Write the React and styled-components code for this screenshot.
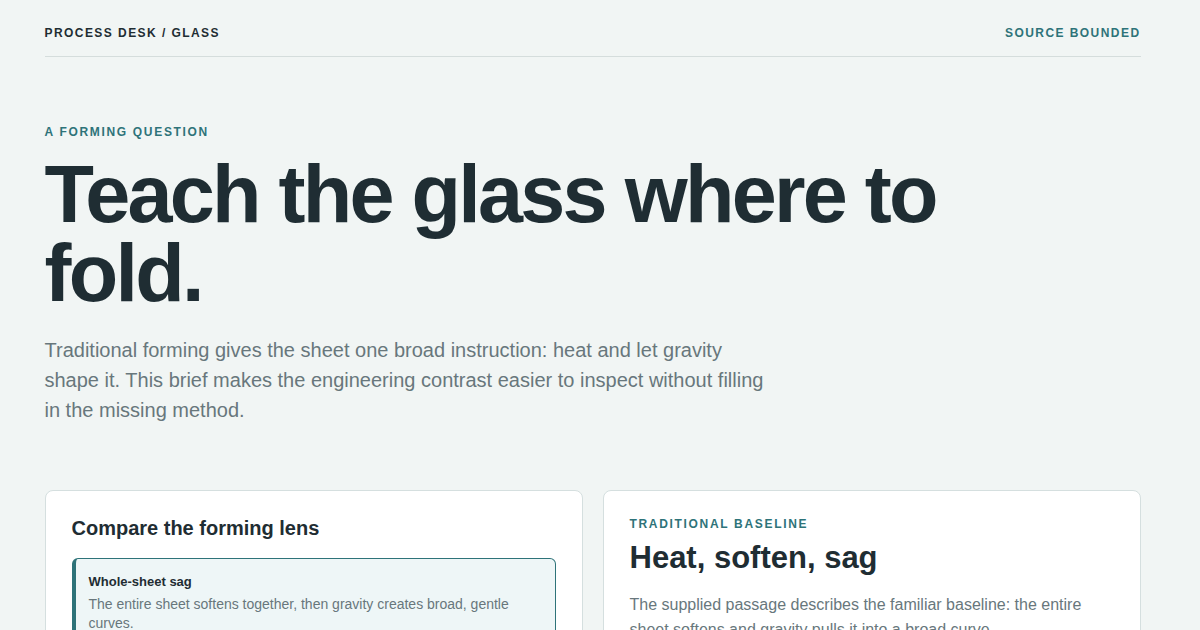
import React from "react";
import styled, { createGlobalStyle } from "styled-components";

const GlobalStyle = createGlobalStyle`
  html, body {
    margin: 0;
    padding: 0;
    background: #f1f5f4;
  }
  body {
    font-family: "Liberation Sans", Arial, sans-serif;
    color: #1f2d33;
  }
  * {
    box-sizing: border-box;
  }
`;

// leaves room on the right the way a scrolling window does
const Shell = styled.div`
  padding-right: 15px;
`;

const Page = styled.div`
  max-width: 1096px;
  margin: 0 auto;
  padding-bottom: 84px;
`;

const TopBar = styled.header`
  display: flex;
  justify-content: space-between;
  align-items: center;
  padding: 25px 0 15px;
  border-bottom: 1px solid #d5dddc;
`;

const Brand = styled.div`
  font-size: 12px;
  line-height: 16px;
  font-weight: 700;
  letter-spacing: 0.12em;
  text-transform: uppercase;
  color: ${props => (props.$accent ? "#2e7379" : "#1f2d33")};
`;

const Hero = styled.section`
  padding-top: 67px;
`;

const Eyebrow = styled.div`
  font-size: 12px;
  line-height: 16px;
  font-weight: 700;
  letter-spacing: 0.14em;
  text-transform: uppercase;
  color: #2e7379;
`;

const Headline = styled.h1`
  margin: 15px 0 0;
  max-width: 940px;
  font-size: 81px;
  line-height: 79px;
  font-weight: 700;
  letter-spacing: -0.034em;
  color: #1f2d33;
`;

const Lede = styled.p`
  margin: 22px 0 0;
  max-width: 722px;
  font-size: 20px;
  line-height: 30px;
  color: #68777c;
`;

const Cards = styled.section`
  display: grid;
  grid-template-columns: 1fr 1fr;
  gap: 20px;
  margin-top: 65px;
`;

const Card = styled.article`
  background: #ffffff;
  border: 1px solid #d5dfdf;
  border-radius: 8px;
  padding: 25px 26px 28px;
`;

const CardTitle = styled.h2`
  margin: 0 0 18px;
  font-size: 20px;
  line-height: 24px;
  font-weight: 700;
  color: #1f2d33;
`;

const Options = styled.div`
  display: flex;
  flex-direction: column;
  gap: 10px;
`;

const Option = styled.div`
  padding: 14px 16px 14px 13px;
  border: 1px solid ${props => (props.$active ? "#2e7379" : "#d5dfdf")};
  border-left: 4px solid ${props => (props.$active ? "#2e7379" : "#d5dfdf")};
  border-radius: 6px;
  background: ${props => (props.$active ? "#eef6f7" : "#ffffff")};
`;

const OptionName = styled.div`
  font-size: 13px;
  line-height: 18px;
  font-weight: 700;
  color: #1f2d33;
`;

const OptionText = styled.div`
  margin-top: 4px;
  font-size: 14px;
  line-height: 19px;
  color: #68777c;
`;

const CardEyebrow = styled(Eyebrow)`
  margin-bottom: 6px;
`;

const CardHeading = styled.h3`
  margin: 0;
  font-size: 31px;
  line-height: 40px;
  font-weight: 700;
  color: #1f2d33;
`;

const CardText = styled.p`
  margin: 14px 0 0;
  font-size: 16px;
  line-height: 25px;
  color: #68777c;
`;

const Points = styled.ul`
  margin: 18px 0 0;
  padding: 0;
  list-style: none;
  display: flex;
  flex-direction: column;
  gap: 10px;
`;

const Point = styled.li`
  padding-top: 10px;
  border-top: 1px solid #e3eaea;
  font-size: 14px;
  line-height: 20px;
  color: #1f2d33;
`;

const options = [
  {
    name: "Whole-sheet sag",
    text: "The entire sheet softens together, then gravity creates broad, gentle curves.",
    active: true
  },
  {
    name: "Directed folding",
    text: "Heat is placed where the fold should begin, so the sheet bends along chosen lines.",
    active: false
  },
  {
    name: "Open question",
    text: "The brief does not describe how the method is controlled, so it stays unstated here.",
    active: false
  }
];

export default function App() {
  return (
    <Shell>
      <GlobalStyle />
      <Page>
        <TopBar>
          <Brand>Process desk / Glass</Brand>
          <Brand $accent>Source bounded</Brand>
        </TopBar>

        <Hero>
          <Eyebrow>A forming question</Eyebrow>
          <Headline>Teach the glass where to fold.</Headline>
          <Lede>
            Traditional forming gives the sheet one broad instruction: heat and let gravity
            shape it. This brief makes the engineering contrast easier to inspect without
            filling in the missing method.
          </Lede>
        </Hero>

        <Cards>
          <Card>
            <CardTitle>Compare the forming lens</CardTitle>
            <Options>
              {options.map(o => (
                <Option key={o.name} $active={o.active}>
                  <OptionName>{o.name}</OptionName>
                  <OptionText>{o.text}</OptionText>
                </Option>
              ))}
            </Options>
          </Card>

          <Card>
            <CardEyebrow>Traditional baseline</CardEyebrow>
            <CardHeading>Heat, soften, sag</CardHeading>
            <CardText>
              The supplied passage describes the familiar baseline: the entire sheet softens
              and gravity pulls it into a broad curve.
            </CardText>
            <Points>
              <Point>One heating instruction for the whole sheet.</Point>
              <Point>Shape comes from gravity and the mould below.</Point>
              <Point>Curves stay broad and gentle rather than sharp.</Point>
            </Points>
          </Card>
        </Cards>
      </Page>
    </Shell>
  );
}
